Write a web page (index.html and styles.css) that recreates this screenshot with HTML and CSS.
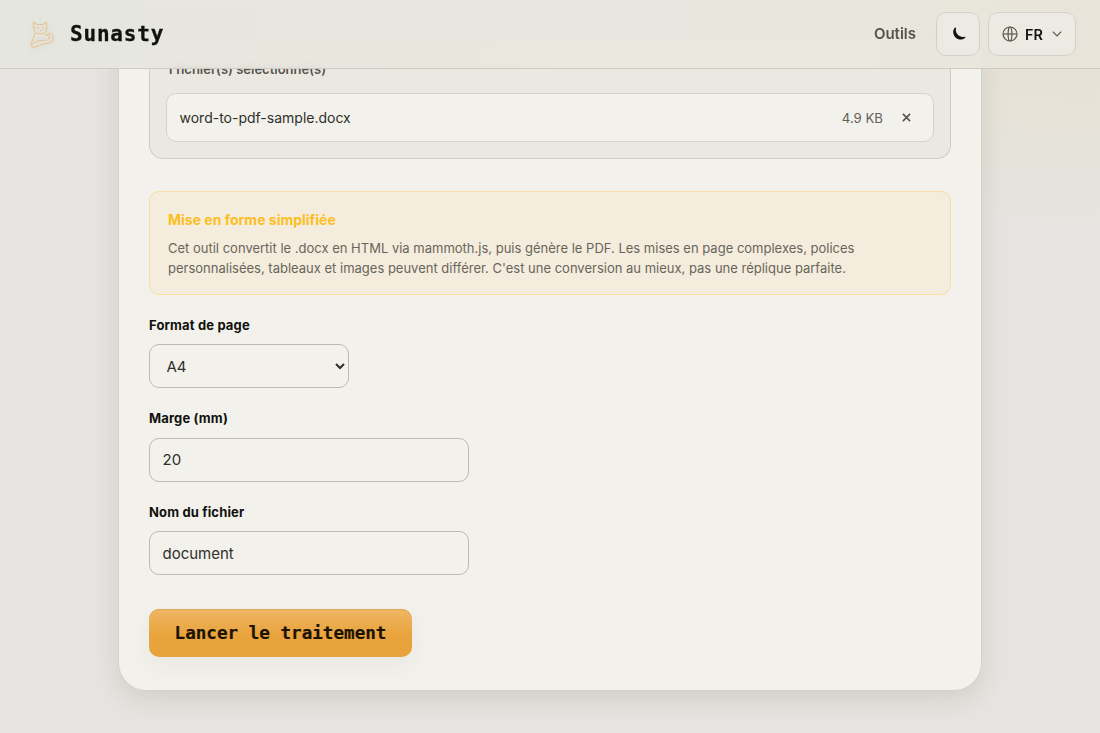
FILE: index.html
```html
<!DOCTYPE html>
<html lang="fr">
<head>
    <meta charset="UTF-8">
    <meta name="viewport" content="width=device-width, initial-scale=1.0">
    <title>Sunasty</title>
    <link rel="stylesheet" href="styles.css">
</head>
<body>
    <header class="site-header">
        <a class="brand" href="#">
            <svg class="brand-logo" viewBox="0 0 28 30" fill="none" stroke="currentColor" stroke-width="1" stroke-linejoin="round" stroke-linecap="round">
                <path d="M6 9 5.500 3 9 5.500h6L18.500 3 19 10c0 3-3 5-6.500 5S6 13 6 9z"/>
                <path d="M9 9h1.500M14.500 9H16M12 11.500h1M7 14l-2 6-2 5 1 3 3 0 8-3 6-1 4-2 0-5-3-3-4 2M18 16c3-1 4 2 3 5M4 25l5-3 9-1"/>
            </svg>
            <span class="brand-name">Sunasty</span>
        </a>
        <nav class="site-nav">
            <a class="nav-link" href="#">Outils</a>
            <button class="nav-button theme-button" type="button" aria-label="Thème">
                <svg class="moon" viewBox="0 0 16 16" fill="currentColor"><path d="M4.300 1.600C1.500 3.600 1.500 8.200 4.300 11.200c2.900 3 7.600 3.100 10 .3.400-.6 0-1-.7-.8-2.500.7-4.900 0-6.700-1.900C5 6.900 4.500 4.700 5 2.300c.1-.7-.2-1-.7-.7z"/></svg>
            </button>
            <button class="nav-button lang-button" type="button">
                <svg class="globe" viewBox="0 0 16 16" fill="none" stroke="currentColor" stroke-width="1.200"><circle cx="8" cy="8" r="7"/><ellipse cx="8" cy="8" rx="1.900" ry="7"/><path d="M1 8h14"/></svg>
                <span>FR</span>
                <svg class="chevron" viewBox="0 0 10 10" fill="none" stroke="currentColor" stroke-width="1.100" stroke-linecap="round" stroke-linejoin="round"><path d="m1.200 3 3.800 3.900L8.800 3"/></svg>
            </button>
        </nav>
    </header>

    <main class="page">
        <form class="card">
            <section class="files">
                <p class="files-count">1 fichier(s) sélectionné(s)</p>
                <div class="file">
                    <span class="file-name">word-to-pdf-sample.docx</span>
                    <span class="file-size">4.9 KB</span>
                    <button class="file-remove" type="button" aria-label="Retirer">
                        <svg viewBox="0 0 10 10" fill="none" stroke="currentColor" stroke-width="1.800"><path d="m1 1 8 8M9 1 1 9"/></svg>
                    </button>
                </div>
            </section>

            <section class="notice">
                <h2 class="notice-title">Mise en forme simplifiée</h2>
                <p class="notice-text">Cet outil convertit le .docx en HTML via mammoth.js, puis génère le PDF. Les mises en page complexes, polices personnalisées, tableaux et images peuvent différer. C'est une conversion au mieux, pas une réplique parfaite.</p>
            </section>

            <div class="field">
                <label for="format">Format de page</label>
                <select class="control control-select" id="format">
                    <option>A4</option>
                    <option>Letter</option>
                </select>
            </div>
            <div class="field">
                <label for="margin">Marge (mm)</label>
                <input class="control" id="margin" type="text" value="20">
            </div>
            <div class="field">
                <label for="filename">Nom du fichier</label>
                <input class="control" id="filename" type="text" value="document">
            </div>

            <button class="submit" type="button">Lancer le traitement</button>
        </form>
    </main>
</body>
</html>
```

FILE: styles.css
```css
* {
    box-sizing: border-box;
}
body {
    margin: 0;
    height: 733px;
    overflow: hidden;
    font-family: Inter, "Liberation Sans", sans-serif;
    color: #11110e;
    background: radial-gradient(ellipse 460px 230px at 100% 0, #e8e1d0, transparent), #e5e4e0;
}
h2, p {
    margin: 0;
}
.site-header {
    position: sticky;
    top: 0;
    z-index: 10;
    display: flex;
    justify-content: space-between;
    align-items: center;
    height: 69px;
    padding: 0 24px 0 28px;
    border-bottom: 1px solid #cccbc5;
    background: linear-gradient(90deg, rgba(230, 230, 223, 0.93), rgba(232, 232, 223, 0.93) 75%, rgba(232, 228, 217, 0.93));
    backdrop-filter: blur(2px);
}
.brand {
    display: flex;
    align-items: center;
    gap: 14px;
    color: inherit;
    text-decoration: none;
}
.brand-logo {
    width: 28px;
    height: 30px;
    color: #e9c08a;
    filter: drop-shadow(0 2px 3px rgba(90, 80, 50, 0.15));
}
.brand-name {
    font-family: "DejaVu Sans Mono", monospace;
    font-size: 21px;
    font-weight: 700;
    letter-spacing: 0.8px;
    -webkit-text-stroke: 0.3px;
}
.site-nav {
    display: flex;
    align-items: center;
    gap: 8px;
}
.nav-link {
    margin-right: 12px;
    font-size: 15px;
    font-weight: 600;
    line-height: 20px;
    padding-bottom: 1px;
    color: #57554c;
    text-decoration: none;
}
.nav-button {
    display: flex;
    align-items: center;
    justify-content: center;
    height: 44px;
    padding: 0;
    border: 1px solid #d3d0ca;
    border-radius: 10px;
    background: #edeae4;
    color: #11110e;
    font: 600 14.4px Inter, sans-serif;
}
.theme-button {
    width: 44px;
}
.lang-button {
    width: 88px;
    gap: 7px;
}
.moon {
    width: 16px;
    height: 16px;
    margin-left: 2px;
}
.globe {
    width: 16px;
    height: 16px;
    color: #5b594f;
}
.chevron {
    width: 10px;
    height: 10px;
    margin-left: 2px;
    color: #5b594f;
}
.page {
    width: 864px;
    margin: -29px 0 0 118px;
}
.card {
    height: 651px;
    padding: 0 30px;
    border: 1px solid #d5d3c9;
    border-top: 0;
    border-radius: 0 0 28px 28px;
    background: #f2f1ec;
    box-shadow: 0 8px 24px rgba(60, 60, 30, 0.12);
}
.files {
    height: 119px;
    padding: 19px 16px 16px;
    border: 1px solid #cfccc5;
    border-top: 0;
    border-radius: 0 0 14px 14px;
    background: #ebe8e2;
}
.files-count {
    padding-left: 1px;
    font-size: 13px;
    font-weight: 600;
    line-height: 20px;
    color: #57554c;
}
.file {
    display: flex;
    align-items: center;
    height: 49px;
    margin-top: 14px;
    padding: 0 13px 0 12.500px;
    border: 1px solid #d5d3cc;
    border-radius: 10px;
    background: #f2f1ec;
}
.file-name {
    flex: 1;
    font-size: 14px;
    color: #302f29;
}
.file-size {
    font-size: 13.200px;
    color: #626057;
}
.file-remove {
    display: flex;
    align-items: center;
    justify-content: center;
    width: 28px;
    height: 28px;
    margin-left: 9px;
    padding: 0;
    border: 0;
    background: none;
    color: #57554c;
}
.file-remove svg {
    width: 9px;
    height: 9px;
}
.notice {
    height: 104px;
    margin-top: 32px;
    padding: 18px 18px 0;
    border: 1px solid #f6dda0;
    border-radius: 10px;
    background: #f4eddd;
}
.notice-title {
    font-size: 14px;
    font-weight: 700;
    line-height: 20px;
    color: #fbbf24;
}
.notice-text {
    margin-top: 8px;
    font-size: 13px;
    line-height: 20.400px;
    color: #69655a;
}
.field {
    display: flex;
    flex-direction: column;
    gap: 8px;
    margin-top: 20px;
}
.field label {
    font-size: 13px;
    font-weight: 700;
    line-height: 21.400px;
    letter-spacing: 0.15px;
}
.control {
    width: 320px;
    height: 44px;
    padding: 0 12.500px;
    border: 1px solid #babab3;
    border-radius: 10px;
    background: #f2f1ec;
    color: #302f29;
    font: 400 15px Inter, sans-serif;
}
.control-select {
    width: 200px;
    padding: 0 0 0 12.500px;
}
.submit {
    display: block;
    width: 263px;
    height: 48px;
    margin-top: 34px;
    padding: 0;
    border: 0;
    border-radius: 10px;
    background: linear-gradient(#f0b765, #e8a33c 55%);
    box-shadow: inset 0 1px #dfaa58, 0 10px 26px rgba(60, 60, 30, 0.05);
    color: #1c1204;
    font: 700 17.600px "DejaVu Sans Mono", monospace;
    -webkit-text-stroke: 0.2px;
}
```
